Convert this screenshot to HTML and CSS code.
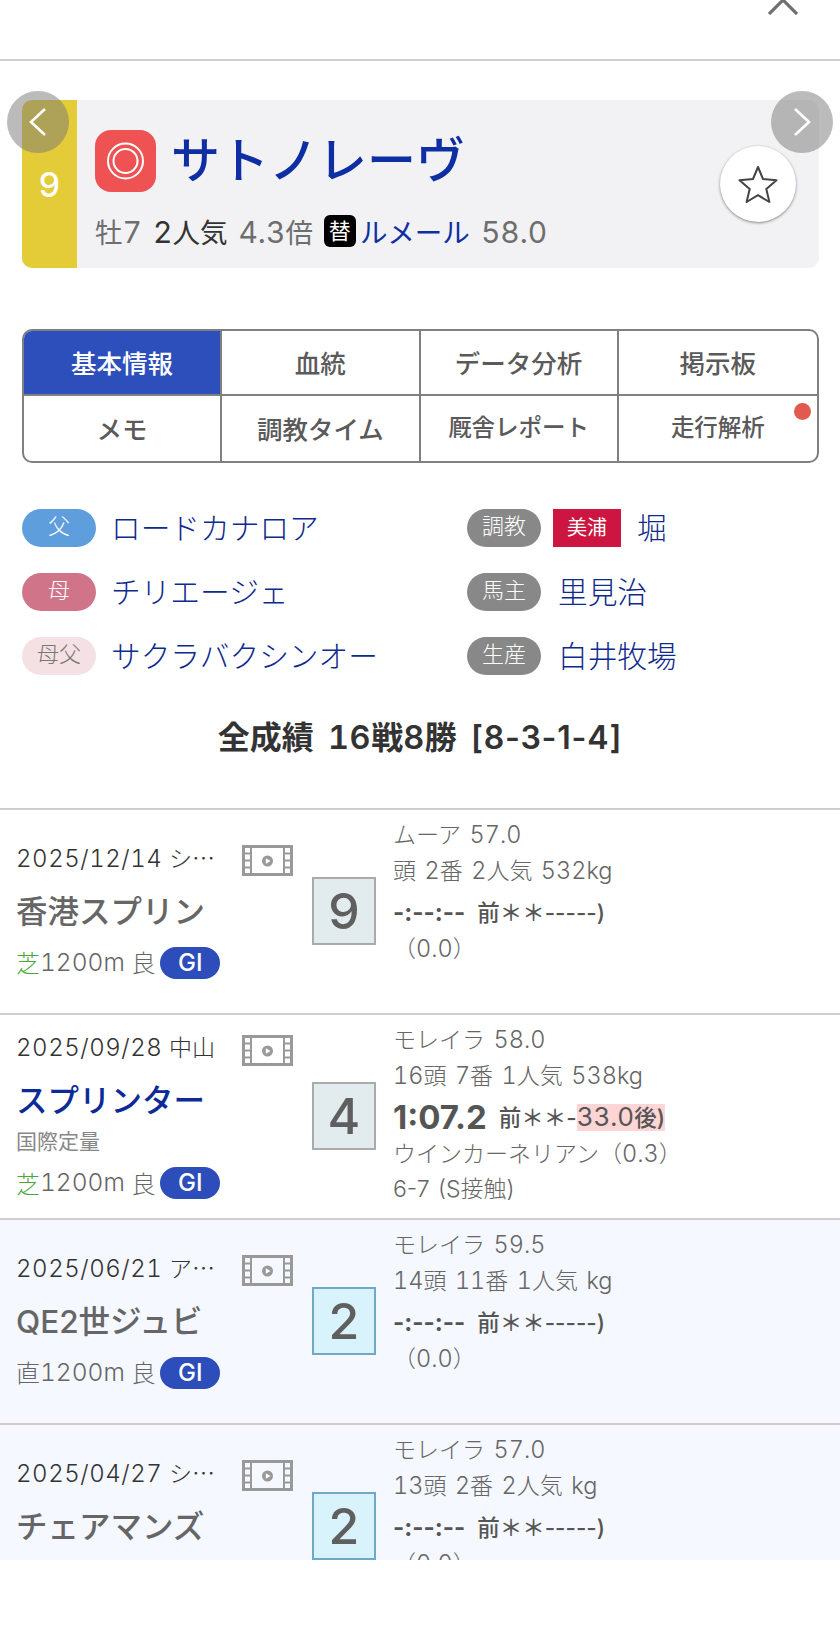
FILE: index.html
```html
<!DOCTYPE html>
<html lang="ja">
<head>
<meta charset="utf-8">
<title>サトノレーヴ</title>
<link rel="stylesheet" href="styles.css">
</head>
<body>
<header class="topbar">
  <svg class="close" width="30" height="30" viewBox="0 0 30 30"><path d="M1 1L29 29M29 1L1 29" fill="none" stroke="#6f6f6f" stroke-width="3.200"/></svg>
</header>

<section class="card">
  <div class="gate">9</div>
  <div class="card-body">
    <div class="name-row">
      <svg class="mark" width="61" height="62" viewBox="0 0 61 62"><rect width="61" height="62" rx="16" fill="#ee5253"/><circle cx="30.500" cy="31" r="17.500" fill="none" stroke="#fff" stroke-width="2"/><circle cx="30.500" cy="31" r="12" fill="none" stroke="#fff" stroke-width="2"/></svg>
      <span class="horse">サトノレーヴ</span>
    </div>
    <div class="sub-row"><span>牡<span class="n">7</span></span><span class="dark"><span class="n">2</span>人気</span><span><span class="n">4.3</span>倍</span><span class="jockey"><b class="swap">替</b><span class="link">ルメール</span></span><span class="n">58.0</span></div>
  </div>
  <button class="fav" aria-label="お気に入り"><svg width="40" height="38" viewBox="0 0 40 38"><path d="M20 2L25 14L38.500 15.200L28.300 24L31.400 37L20 30.200L8.600 37L11.700 24L1.500 15.200L15 14Z" fill="none" stroke="#444" stroke-width="2" stroke-linejoin="round"/></svg></button>
  <span class="nav nav-prev"><svg width="20" height="30" viewBox="0 0 20 30"><path d="M17 2L3 15L17 28" fill="none" stroke="#fff" stroke-width="2.600"/></svg></span>
  <span class="nav nav-next"><svg width="20" height="30" viewBox="0 0 20 30"><path d="M3 2L17 15L3 28" fill="none" stroke="#fff" stroke-width="2.600"/></svg></span>
</section>

<nav class="tabs">
  <a class="tab active">基本情報</a>
  <a class="tab">血統</a>
  <a class="tab">データ分析</a>
  <a class="tab">掲示板</a>
  <a class="tab">メモ</a>
  <a class="tab">調教タイム</a>
  <a class="tab small">厩舎レポート</a>
  <a class="tab small">走行解析<i class="dot"></i></a>
</nav>

<section class="profile">
  <div class="item"><span class="pill sire">父</span><a class="plink">ロードカナロア</a></div>
  <div class="item"><span class="pill gray">調教</span><span class="area">美浦</span><a class="plink">堀</a></div>
  <div class="item"><span class="pill dam">母</span><a class="plink">チリエージェ</a></div>
  <div class="item"><span class="pill gray">馬主</span><a class="plink">里見治</a></div>
  <div class="item"><span class="pill damsire">母父</span><a class="plink">サクラバクシンオー</a></div>
  <div class="item"><span class="pill gray">生産</span><a class="plink">白井牧場</a></div>
</section>

<h2 class="record">全成績 <span class="n">16</span>戦<span class="n">8</span>勝 <span class="tally">[8-3-1-4]</span></h2>

<section class="races">
  <article class="race">
    <div class="left">
      <div class="date-row"><span class="date"><span class="n">2025/12/14</span> シ<span class="cjk">…</span></span>
        <svg class="film" width="51" height="31" viewBox="0 0 51 31"><use href="#film"/></svg></div>
      <div class="rname">香港スプリン</div>
      <div class="track"><span class="turf">芝</span><span class="n">1200m</span> 良 <span class="grade">GI</span></div>
    </div>
    <div class="rank">9</div>
    <div class="right">
      <div>ムーア <span class="n">57.0</span></div>
      <div>頭 <span class="n">2</span>番 <span class="n">2</span>人気 <span class="n">532kg</span></div>
      <div class="result"><b class="time">-:--:--</b><b class="pace">前＊＊-----)</b></div>
      <div>（<span class="n">0.0</span>）</div>
    </div>
  </article>

  <article class="race">
    <div class="left">
      <div class="date-row"><span class="date"><span class="n">2025/09/28</span> 中山</span>
        <svg class="film" width="51" height="31" viewBox="0 0 51 31"><use href="#film"/></svg></div>
      <div class="rname link">スプリンター</div>
      <div class="cond">国際定量</div>
      <div class="track"><span class="turf">芝</span><span class="n">1200m</span> 良 <span class="grade">GI</span></div>
    </div>
    <div class="rank">4</div>
    <div class="right">
      <div>モレイラ <span class="n">58.0</span></div>
      <div><span class="n">16</span>頭 <span class="n">7</span>番 <span class="n">1</span>人気 <span class="n">538kg</span></div>
      <div class="result"><b class="time big">1:07.2</b><b class="pace">前＊＊-<mark><span class="n">33.0</span>後)</mark></b></div>
      <div>ウインカーネリアン（<span class="n">0.3</span>）</div>
      <div>6-7 (S接触)</div>
    </div>
  </article>

  <article class="race tinted">
    <div class="left">
      <div class="date-row"><span class="date"><span class="n">2025/06/21</span> ア<span class="cjk">…</span></span>
        <svg class="film" width="51" height="31" viewBox="0 0 51 31"><use href="#film"/></svg></div>
      <div class="rname">QE2世ジュビ</div>
      <div class="track">直<span class="n">1200m</span> 良 <span class="grade">GI</span></div>
    </div>
    <div class="rank second">2</div>
    <div class="right">
      <div>モレイラ <span class="n">59.5</span></div>
      <div><span class="n">14</span>頭 <span class="n">11</span>番 <span class="n">1</span>人気 <span class="n">kg</span></div>
      <div class="result"><b class="time">-:--:--</b><b class="pace">前＊＊-----)</b></div>
      <div>（<span class="n">0.0</span>）</div>
    </div>
  </article>

  <article class="race tinted">
    <div class="left">
      <div class="date-row"><span class="date"><span class="n">2025/04/27</span> シ<span class="cjk">…</span></span>
        <svg class="film" width="51" height="31" viewBox="0 0 51 31"><use href="#film"/></svg></div>
      <div class="rname">チェアマンズ</div>
      <div class="track">芝<span class="n">1200m</span> 良 <span class="grade">GI</span></div>
    </div>
    <div class="rank second">2</div>
    <div class="right">
      <div>モレイラ <span class="n">57.0</span></div>
      <div><span class="n">13</span>頭 <span class="n">2</span>番 <span class="n">2</span>人気 <span class="n">kg</span></div>
      <div class="result"><b class="time">-:--:--</b><b class="pace">前＊＊-----)</b></div>
      <div>（<span class="n">0.0</span>）</div>
    </div>
  </article>
</section>

<svg class="defs" width="0" height="0">
  <symbol id="film" viewBox="0 0 51 31">
    <rect x="1.500" y="1.500" width="48" height="28" fill="none" stroke="#999" stroke-width="3"/>
    <path d="M9 1V30M42 1V30" stroke="#999" stroke-width="2"/>
    <path d="M2 8.500H9M2 15.500H9M2 22.500H9M42 8.500H49M42 15.500H49M42 22.500H49" stroke="#999" stroke-width="2"/>
    <circle cx="25.500" cy="16" r="5.500" fill="#999"/>
    <path d="M23.800 13.200L28.500 16L23.800 18.800Z" fill="#fff"/>
  </symbol>
</svg>
</body>
</html>
```

FILE: styles.css
```css
* { box-sizing: border-box; }
html, body { margin: 0; padding: 0; background: #fff; }
body {
  width: 840px;
  height: 1633px;
  overflow: hidden;
  font-family: Inter, "Noto Sans CJK JP", sans-serif;
  color: #666;
}
.n { font-variant-numeric: tabular-nums; }
.topbar {
  height: 61px;
  border-bottom: 2px solid #cfcfcf;
  display: flex;
  justify-content: flex-end;
  padding-right: 42px;
}
.close { margin-top: -15px; }

.card {
  position: relative;
  height: 168px;
  margin: 39px 21px 0 22px;
  background: #f2f2f4;
  border-radius: 10px;
  display: flex;
}
.gate {
  width: 55px;
  background: #e4cb38;
  border-radius: 10px 0 0 10px;
  color: #fff;
  font-size: 34px;
  font-weight: 500;
  display: flex;
  align-items: center;
  justify-content: center;
}
.card-body { padding: 30px 0 0 18px; }
.name-row { display: flex; align-items: center; gap: 15px; height: 62px; }
.mark { flex: none; }
.horse { font-size: 49px; font-weight: 500; color: #0e2ea3; line-height: 62px; }
.sub-row {
  display: flex;
  align-items: baseline;
  gap: 11px;
  height: 40px;
  margin-top: 19px;
  font-size: 27.500px;
  color: #6e6e6e;
}
.sub-row .n { font-size: 30px; font-weight: 400; }
.dark { color: #333; }
.jockey { display: flex; align-items: center; gap: 4px; align-self: center; }
.swap {
  width: 32px;
  height: 32px;
  border-radius: 6px;
  background: #000;
  color: #fff;
  font-size: 22px;
  font-weight: 400;
  line-height: 32px;
  text-align: center;
}
.link { color: #0e2ea3; }
.fav {
  position: absolute;
  left: 698px;
  top: 46px;
  width: 76px;
  height: 76px;
  border: 0;
  padding: 0;
  border-radius: 50%;
  background: #fff;
  box-shadow: 0 1px 3px rgba(0,0,0,.45);
  display: flex;
  align-items: center;
  justify-content: center;
}
.nav {
  position: absolute;
  top: -9px;
  width: 62px;
  height: 62px;
  border-radius: 50%;
  background: rgba(120,120,120,.5);
  display: flex;
  align-items: center;
  justify-content: center;
}
.nav-prev { left: -15px; }
.nav-next { right: -14px; }

.tabs {
  margin: 61px 21px 0 22px;
  height: 134px;
  border: 2px solid #808080;
  border-radius: 10px;
  overflow: hidden;
  display: grid;
  grid-template-columns: repeat(4, 1fr);
  grid-template-rows: 1fr 1fr;
}
.tab {
  position: relative;
  display: flex;
  align-items: center;
  justify-content: center;
  padding-bottom: 2px;
  font-size: 25.500px;
  font-weight: 500;
  color: #5a5a5a;
  border-right: 2px solid #808080;
  border-bottom: 2px solid #808080;
}
.tab:nth-child(4n) { border-right: 0; }
.tab:nth-child(n+5) { border-bottom: 0; }
.tab.active { background: #2d4fbb; color: #fff; }
.tab.small { font-size: 23.500px; padding-bottom: 6px; }
.dot {
  position: absolute;
  top: 7px;
  right: 6px;
  width: 17px;
  height: 17px;
  border-radius: 50%;
  background: #e05a50;
}

.profile {
  margin: 46px 0 0 22px;
  display: grid;
  grid-template-columns: 445px 1fr;
  row-gap: 26px;
}
.item { display: flex; align-items: center; height: 38px; }
.pill {
  width: 74px;
  height: 38px;
  border-radius: 19px;
  margin-right: 15px;
  font-size: 22px;
  font-weight: 300;
  color: #fff;
  line-height: 35px;
  text-align: center;
}
.sire { background: #5f9edc; }
.dam { background: #d0748a; }
.damsire { background: #f5e0e4; color: #777; }
.gray { background: #888; margin-right: 17px; }
.area {
  width: 68px;
  height: 38px;
  margin: 0 16px 0 -5px;
  background: #cc1540;
  color: #fff;
  font-size: 20px;
  line-height: 38px;
  text-align: center;
}
.plink { font-size: 29.700px; font-weight: 300; color: #0e2a8c; margin-top: -3px; }

.record {
  margin: 43px 0 50px;
  height: 40px;
  line-height: 40px;
  text-align: center;
  font-size: 32px;
  font-weight: 600;
  word-spacing: 6px;
  color: #333;
}
.record .n { font-size: 32.500px; letter-spacing: .6px; }
.tally { letter-spacing: .8px; }

.races { height: 752px; overflow: hidden; }
.race {
  height: 205px;
  border-top: 2px solid #cfcfcf;
  background: #fff;
  display: flex;
  align-items: flex-start;
  padding-left: 16px;
}
.tinted { background: #f5f8ff; }
.left {
  width: 296px;
  height: 203px;
  padding-bottom: 6px;
  display: flex;
  flex-direction: column;
  justify-content: center;
  flex: none;
}
.date-row { display: flex; align-items: center; height: 34px; }
.date { width: 226px; font-size: 23px; color: #333; font-weight: 300; white-space: nowrap; }
.date .n { font-size: 24px; letter-spacing: .55px; }
.cjk { font-family: "Noto Sans CJK JP", sans-serif; }
.film { flex: none; margin-top: 8px; }
.rname { margin-top: 13px; height: 50px; line-height: 50px; font-size: 31.500px; font-weight: 500; color: #666; }
.rname.link { color: #0e2a96; }
.cond { height: 32px; line-height: 32px; font-size: 21px; color: #888; }
.track { margin-top: 9px; height: 32px; display: flex; align-items: center; font-size: 24px; font-weight: 300; color: #666; white-space: pre; }
.track .n { font-size: 24.500px; }
.cond + .track { margin-top: 8px; }
.turf { color: #4aa83a; }
.grade {
  width: 60px;
  height: 32px;
  margin: 2px 0 0 -2px;
  border-radius: 16px;
  background: #2c4dba;
  color: #fff;
  font-size: 24px;
  font-weight: 500;
  line-height: 32px;
  text-align: center;
}
.rank {
  flex: none;
  width: 64px;
  height: 68px;
  margin-top: 67px;
  border: 2px solid #aaa;
  background: #e2ebee;
  color: #5f5f5f;
  font-size: 50px;
  font-weight: 500;
  line-height: 64px;
  text-align: center;
}
.second { background: #d9f3fd; border-color: #6fa9c6; }
.right {
  margin-left: 17px;
  padding-top: 7px;
  font-size: 23px;
  font-weight: 300;
  line-height: 35px;
  word-spacing: 2px;
  color: #666;
  white-space: nowrap;
}
.right .n { font-size: 23.500px; }
.result { display: flex; align-items: center; height: 40px; margin: 3px 0 -1px; }
.time { font-size: 24px; font-weight: 700; color: #555; margin-right: 12px; }
.time.big { font-size: 33px; }
.pace { font-size: 22.500px; font-weight: 500; color: #555; }
.right .pace .n { font-size: 26px; font-weight: 400; }
mark { background: #fdd5d5; color: inherit; }
.defs { position: absolute; }
```
